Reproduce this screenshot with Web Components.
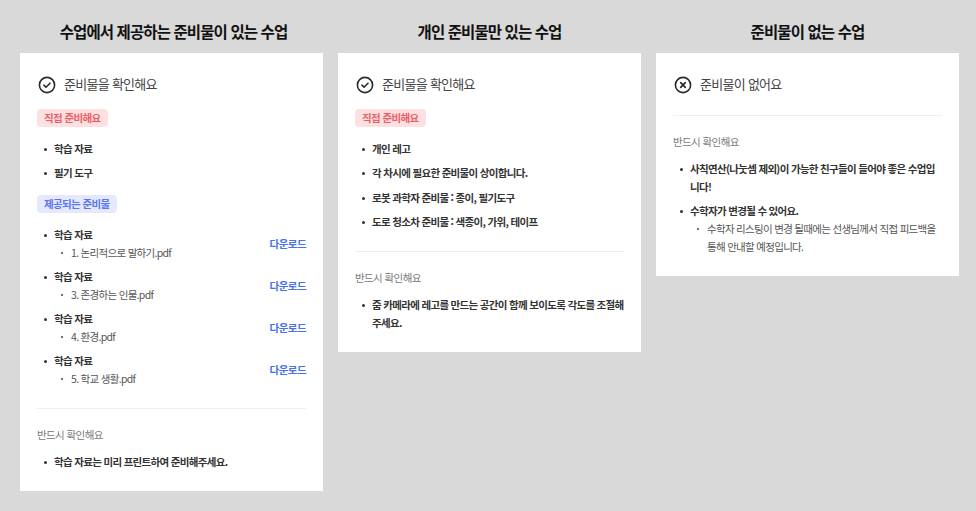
<!DOCTYPE html>
<html lang="ko"><head><meta charset="utf-8"><title>수업 준비물</title>
<style>
html,body{margin:0;background:#d9d9d9}
body{font-family:"Noto Sans CJK KR","Noto Sans",sans-serif;width:976px;height:511px;overflow:hidden}
</style></head><body>
<x-board>
<x-col title="수업에서 제공하는 준비물이 있는 수업" style="--title-inset:4px">
  <x-head icon="check">준비물을 확인해요</x-head>
  <x-badge tone="red">직접 준비해요</x-badge>
  <x-list>
    <x-item>학습 자료</x-item>
    <x-item>필기 도구</x-item>
  </x-list>
  <x-badge tone="blue" style="margin-top:13px">제공되는 준비물</x-badge>
  <x-list>
    <x-file file="1. 논리적으로 말하기.pdf">학습 자료</x-file>
    <x-file file="3. 존경하는 인물.pdf">학습 자료</x-file>
    <x-file file="4. 환경.pdf">학습 자료</x-file>
    <x-file file="5. 학교 생활.pdf">학습 자료</x-file>
  </x-list>
  <x-rule></x-rule>
  <x-note>반드시 확인해요</x-note>
  <x-list tight>
    <x-item>학습 자료는 미리 프린트하여 준비해주세요.</x-item>
  </x-list>
</x-col>
<x-col title="개인 준비물만 있는 수업">
  <x-head icon="check">준비물을 확인해요</x-head>
  <x-badge tone="red">직접 준비해요</x-badge>
  <x-list style="gap:6.4px">
    <x-item>개인 레고</x-item>
    <x-item>각 차시에 필요한 준비물이 상이합니다.</x-item>
    <x-item>로봇 과학자 준비물 : 종이, 필기도구</x-item>
    <x-item>도로 청소차 준비물 : 색종이, 가위, 테이프</x-item>
  </x-list>
  <x-rule></x-rule>
  <x-note>반드시 확인해요</x-note>
  <x-list tight>
    <x-item>줌 카메라에 레고를 만드는 공간이 함께 보이도록 각도를 조절해주세요.</x-item>
  </x-list>
</x-col>
<x-col title="준비물이 없는 수업">
  <x-head icon="cross">준비물이 없어요</x-head>
  <x-rule style="margin-top:17px"></x-rule>
  <x-note>반드시 확인해요</x-note>
  <x-list tight>
    <x-item>사칙연산(나눗셈 제외)이 가능한 친구들이 들어야 좋은 수업입니다!</x-item>
    <x-item>수학자가 변경될 수 있어요.<x-sub slot="sub">수학자 리스팅이 변경 될때에는 선생님께서 직접 피드백을 통해 안내할 예정입니다.</x-sub></x-item>
  </x-list>
</x-col>
</x-board>
<script>
function def(name, css, html){
  customElements.define(name, class extends HTMLElement{
    connectedCallback(){
      if(this.shadowRoot) return;
      const r=this.attachShadow({mode:'open'});
      r.innerHTML='<style>'+css+'</style>'+(typeof html==='function'?html(this):html);
    }
  });
}
const esc=s=>(s||'').replace(/&/g,'&amp;').replace(/</g,'&lt;');
def('x-board',':host{display:grid;grid-template-columns:repeat(3,303px);gap:15px;padding:21px 17px 0 20px;align-items:start}','<slot></slot>');
def('x-col',`:host{display:block;min-width:0}
h2{margin:0;height:32px;padding-left:var(--title-inset,0);font-size:15.5px;line-height:20px;font-weight:700;color:#111;text-align:center;letter-spacing:-.9px}
.card{background:#fff;padding:17px 17px 20px 17px;display:flex;flex-direction:column}`,
 h=>`<h2>${esc(h.getAttribute('title'))}</h2><div class="card"><slot></slot></div>`);
const ICONS={
 check:'<circle cx="9" cy="9" r="7.6" fill="none" stroke="#2b2b2b" stroke-width="1.6"/><path d="M5.9 9.2l2.1 2 4-4" fill="none" stroke="#2b2b2b" stroke-width="1.6" stroke-linecap="round" stroke-linejoin="round"/>',
 cross:'<circle cx="9" cy="9" r="7.6" fill="none" stroke="#2b2b2b" stroke-width="1.6"/><path d="M6.7 6.7l4.6 4.6M11.3 6.7l-4.6 4.6" fill="none" stroke="#2b2b2b" stroke-width="1.7" stroke-linecap="round"/>'
};
def('x-head',`:host{display:flex;align-items:center;gap:8px;height:28px;padding-left:1px;font-size:13px;line-height:28px;color:#444;letter-spacing:-.72px;font-weight:400}
svg{width:18px;height:18px;flex:none;margin-top:2px}`,
 h=>`<svg viewBox="0 0 18 18">${ICONS[h.getAttribute('icon')]}</svg><slot></slot>`);
def('x-badge',`:host{display:block;align-self:flex-start;margin-top:11px;height:18px;padding:0 7px;border-radius:4px;font-size:10.5px;line-height:18px;font-weight:700;letter-spacing:-.62px}
:host([tone=red]){background:#fde0e0;color:#ec5f68}
:host([tone=blue]){background:#e6e8fd;color:#5878f0}`,'<slot></slot>');
def('x-list',':host{display:flex;flex-direction:column;gap:6px;margin-top:13px}:host([tight]){margin-top:9px}','<slot></slot>');
def('x-item',`:host{display:block;position:relative;padding-left:17px;font-size:10.5px;line-height:18px;font-weight:700;color:#333;letter-spacing:-.68px}
:host::before{content:"";position:absolute;left:6.5px;top:8px;width:3px;height:3px;border-radius:50%;background:#333}`,'<slot></slot><slot name="sub"></slot>');
def('x-sub',`:host{display:block;position:relative;padding-left:17px;font-size:10.5px;line-height:18px;font-weight:400;color:#555;letter-spacing:-.7px}
:host::before{content:"";position:absolute;left:6.5px;top:8px;width:2px;height:2px;border-radius:50%;background:#444}`,'<slot></slot>');
def('x-file',`:host{display:flex;align-items:center;justify-content:space-between}
a{font-size:10.5px;font-weight:700;color:#4a70ec;letter-spacing:-.55px;text-decoration:none;line-height:18px}`,
 h=>`<x-item><slot></slot><x-sub slot="sub">${esc(h.getAttribute('file'))}</x-sub></x-item><a href="#">다운로드</a>`);
def('x-rule',':host{display:block;height:1px;background:#efefef;margin-top:20px}','');
def('x-note',':host{display:block;margin-top:17px;font-size:10.5px;line-height:18px;color:#777;letter-spacing:-.6px}','<slot></slot>');
</script>
</body></html>
